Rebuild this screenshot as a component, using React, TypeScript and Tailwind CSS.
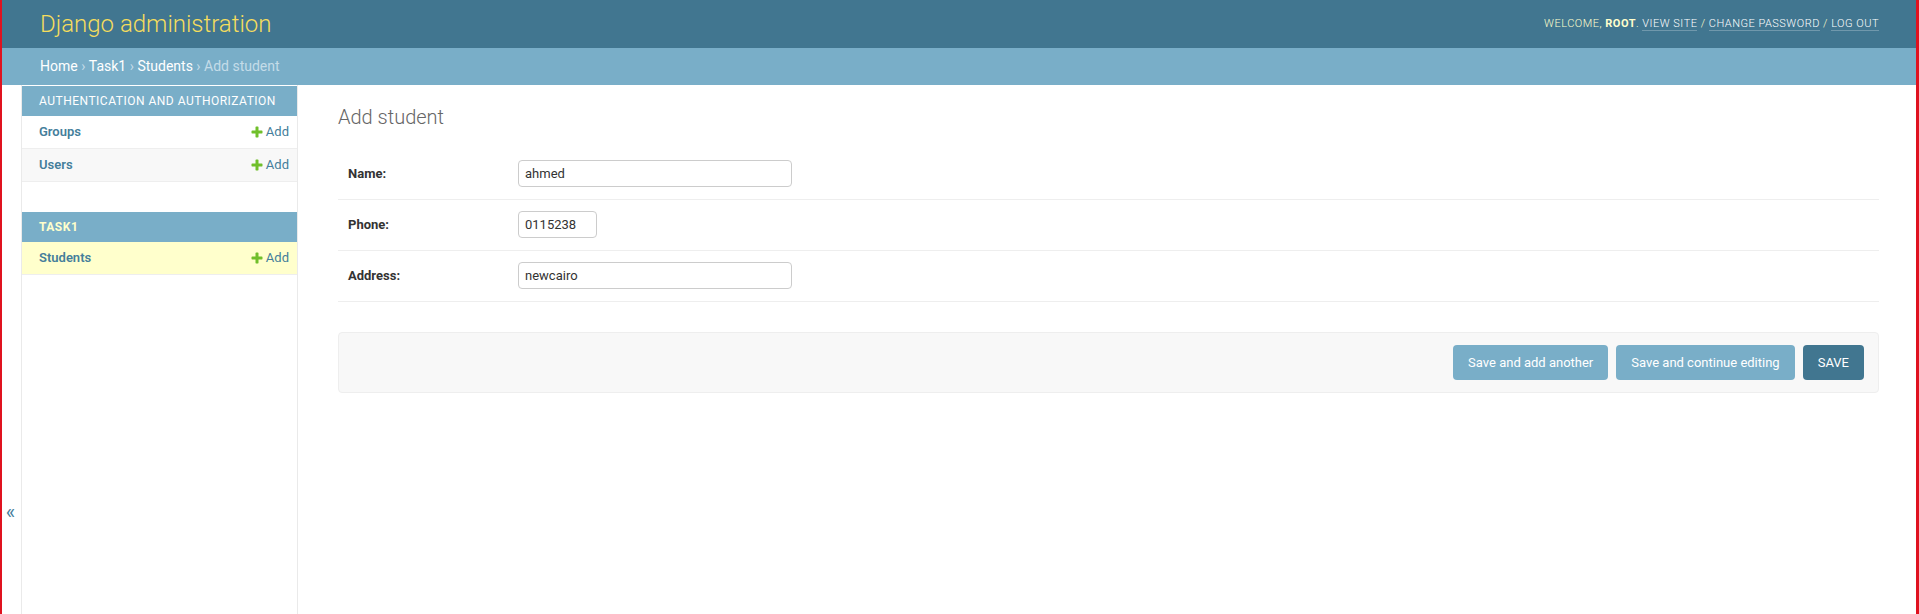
const apps = [
  {
    name: "Authentication and Authorization",
    current: false,
    models: [
      { name: "Groups", current: false },
      { name: "Users", current: false },
    ],
  },
  {
    name: "Task1",
    current: true,
    models: [{ name: "Students", current: true }],
  },
];

const fields = [
  { label: "Name:", value: "ahmed", width: "w-[274px]" },
  { label: "Phone:", value: "0115238", width: "w-[79px]" },
  { label: "Address:", value: "newcairo", width: "w-[274px]" },
];

function AddIcon() {
  return (
    <svg width="14" height="14" viewBox="0 0 1792 1792" className="shrink-0">
      <path
        fill="#70bf2b"
        d="M1600 796v192q0 40-28 68t-68 28h-416v416q0 40-28 68t-68 28h-192q-40 0-68-28t-28-68v-416h-416q-40 0-68-28t-28-68v-192q0-40 28-68t68-28h416v-416q0-40 28-68t68-28h192q40 0 68 28t28 68v416h416q40 0 68 28t28 68z"
      />
    </svg>
  );
}

export default function App() {
  return (
    <div className="relative flex h-[614px] flex-col overflow-hidden bg-white font-[Roboto,Arial,sans-serif] text-[14px] text-[#333]">
      {/* Header */}
      <header className="flex h-12 shrink-0 items-center justify-between bg-[#417690] px-10">
        <h1 className="text-[24px] font-light leading-7 text-[#f5dd5d]">Django administration</h1>
        <div className="text-[11px] font-light uppercase tracking-[0.5px] text-[#ffc]">
          Welcome, <strong className="font-bold">root</strong>.{" "}
          <a className="border-b border-white/25 text-white">View site</a> /{" "}
          <a className="border-b border-white/25 text-white">Change password</a> /{" "}
          <a className="border-b border-white/25 text-white">Log out</a>
        </div>
      </header>

      {/* Breadcrumbs */}
      <div className="flex h-[37px] shrink-0 items-center whitespace-pre bg-[#79aec8] px-10 text-[14px] text-[#c4dce8]">
        <a className="text-white">Home</a>
        <span> › </span>
        <a className="text-white">Task1</a>
        <span> › </span>
        <a className="text-white">Students</a>
        <span> › </span>
        <span>Add student</span>
      </div>

      <div className="flex min-h-0 flex-1">
        {/* Sidebar toggle */}
        <div className="flex w-[22px] shrink-0 justify-center border-r border-[#eaeaea] pt-[415px]">
          <span className="text-[20px] leading-6 text-[#447e9b]">«</span>
        </div>

        {/* Sidebar */}
        <nav className="w-[276px] shrink-0 border-r border-[#eaeaea] pt-px">
          {apps.map((app) => (
            <div key={app.name} className="mb-[30px]">
              <div
                className={
                  app.current
                    ? "bg-[#79aec8] py-[7px] pl-[17px] pr-2 text-[12px] font-bold uppercase leading-4 tracking-[0.5px] text-[#ffc]"
                    : "bg-[#79aec8] py-[7px] pl-[17px] pr-2 text-[12px] uppercase leading-4 tracking-[0.5px] text-white"
                }
              >
                {app.name}
              </div>
              {app.models.map((m, i) => (
                <div
                  key={m.name}
                  className={
                    m.current
                      ? "flex h-[33px] items-center justify-between border-b border-[#eee] bg-[#ffc] pl-[17px] pr-2 text-[13px]"
                      : i % 2 === 1
                        ? "flex h-[33px] items-center justify-between border-b border-[#eee] bg-[#f8f8f8] pl-[17px] pr-2 text-[13px]"
                        : "flex h-[33px] items-center justify-between border-b border-[#eee] bg-white pl-[17px] pr-2 text-[13px]"
                  }
                >
                  <a className="font-semibold text-[#447e9b]">{m.name}</a>
                  <a className="flex items-center gap-[2px] text-[#447e9b]">
                    <AddIcon />
                    Add
                  </a>
                </div>
              ))}
            </div>
          ))}
        </nav>

        {/* Content */}
        <main className="min-w-0 flex-1 px-10 pt-5">
          <h1 className="mb-5 text-[20px] font-light leading-6 text-[#666]">Add student</h1>
          <fieldset className="mb-[30px]">
            {fields.map((f) => (
              <div key={f.label} className="flex items-start border-b border-[#eee] px-[10px] pb-[12px] pt-[11px] text-[13px]">
                <label className="w-[170px] shrink-0 pt-[7px] pr-[10px] font-bold leading-none text-[#333]">{f.label}</label>
                <input
                  readOnly
                  value={f.value}
                  className={`${f.width} h-[27px] rounded-[4px] border border-[#ccc] px-[6px] text-[13px] text-[#333] outline-none`}
                />
              </div>
            ))}
          </fieldset>

          <div className="flex justify-end gap-2 rounded-[4px] border border-[#eee] bg-[#f8f8f8] px-[14px] py-3">
            <button className="h-[35px] rounded-[4px] bg-[#79aec8] px-[15px] text-[13px] text-white">Save and add another</button>
            <button className="h-[35px] rounded-[4px] bg-[#79aec8] px-[15px] text-[13px] text-white">Save and continue editing</button>
            <button className="h-[35px] rounded-[4px] bg-[#417690] px-[15px] text-[13px] uppercase text-white">Save</button>
          </div>
        </main>
      </div>

      {/* window frame edges */}
      <div className="absolute inset-y-0 left-0 w-[2px] bg-[#e0121f]" />
      <div className="absolute inset-y-0 right-0 w-[3px] bg-[#e0121f]" />
    </div>
  );
}
